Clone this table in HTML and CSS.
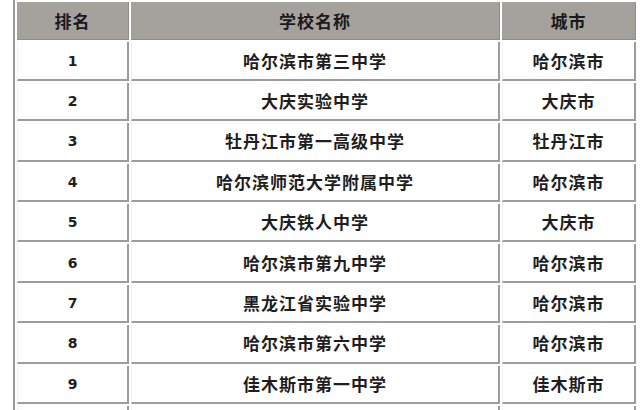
FILE: index.html
```html
<!DOCTYPE html>
<html lang="zh-CN">
<head>
<meta charset="utf-8">
<title>排名</title>
<link rel="stylesheet" href="styles.css">
</head>
<body>
<div class="wrap">
<table class="rank">
<thead>
<tr><th class="c1">排名</th><th class="c2">学校名称</th><th class="c3">城市</th></tr>
</thead>
<tbody>
<tr><td class="num">1</td><td>哈尔滨市第三中学</td><td>哈尔滨市</td></tr>
<tr><td class="num">2</td><td>大庆实验中学</td><td>大庆市</td></tr>
<tr><td class="num">3</td><td>牡丹江市第一高级中学</td><td>牡丹江市</td></tr>
<tr><td class="num">4</td><td>哈尔滨师范大学附属中学</td><td>哈尔滨市</td></tr>
<tr><td class="num">5</td><td>大庆铁人中学</td><td>大庆市</td></tr>
<tr><td class="num">6</td><td>哈尔滨市第九中学</td><td>哈尔滨市</td></tr>
<tr><td class="num">7</td><td>黑龙江省实验中学</td><td>哈尔滨市</td></tr>
<tr><td class="num">8</td><td>哈尔滨市第六中学</td><td>哈尔滨市</td></tr>
<tr><td class="num">9</td><td>佳木斯市第一中学</td><td>佳木斯市</td></tr>
<tr><td class="num"></td><td></td><td></td></tr>
</tbody>
</table>
</div>
</body>
</html>
```
FILE: styles.css
```css
html, body {
  margin: 0;
  padding: 0;
  background: #ffffff;
  overflow: hidden;
}
.wrap {
  padding-left: 13px;
  width: 627px;
  height: 410px;
  overflow: hidden;
}
.rank {
  border-collapse: separate;
  border-spacing: 2px;
  border-left: 2px solid #9a9a9a;
  border-top: 1px solid #d8d8d8;
  table-layout: fixed;
  width: 625px;
  margin-top: -1px;
  font-family: "Noto Sans CJK SC", "Noto Sans", sans-serif;
  color: #1e1e1e;
}
.rank th, .rank td {
  box-sizing: border-box;
  height: 38.4px;
  padding: 0;
  text-align: center;
  vertical-align: middle;
  font-size: 17px;
  font-weight: bold;
  letter-spacing: 1px;
  line-height: 20px;
}
.rank th {
  background: #a5a29e;
  border-right: 1px solid #8e8b88;
  border-bottom: 1px solid #8e8b88;
  color: #1a1a1a;
}
.rank td {
  background: #ffffff;
  border-left: 1px solid #f0f0f0;
  border-right: 2px solid #9c9c9c;
  border-bottom: 2px solid #9c9c9c;
}
.c1 { width: 112px; }
.c2 { width: 369px; }
.c3 { width: 134px; }
.rank td.num {
  font-family: "DejaVu Sans", "Liberation Sans", sans-serif;
  font-size: 14px;
  letter-spacing: 0;
}
```
